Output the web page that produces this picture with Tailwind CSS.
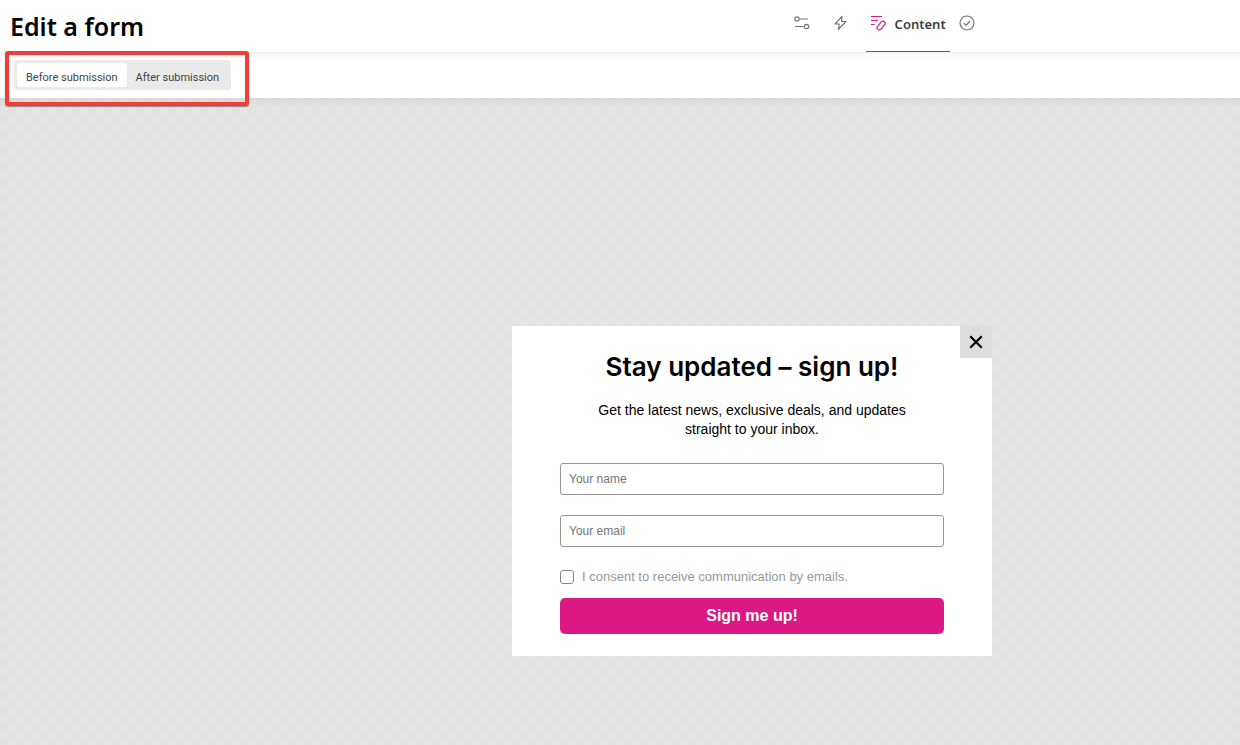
<!doctype html>
<html lang="en">

<head>
  <meta charset="UTF-8" />
  <meta name="viewport" content="width=device-width, initial-scale=1">
  <title>Edit a form</title>
  <script src="https://cdn.jsdelivr.net/npm/@tailwindcss/browser@4"></script>
</head>

<body class="relative flex min-h-screen flex-col bg-white font-['Liberation_Sans',sans-serif] text-black">
  <header class="flex h-[54px] shrink-0 border-b-2 border-[#f4f4f4]">
    <h1 class="w-[64%] pl-[10px] pt-[6px] font-['Noto_Sans',sans-serif] text-[25px] leading-10 font-semibold">Edit a form</h1>
    <nav class="flex h-[52px] text-[#757575]">
      <a href="#" aria-label="Settings" class="pt-[15px]">
        <svg width="16" height="16" viewBox="0 0 16 16" fill="none" stroke="currentColor" stroke-width="1.2">
          <circle cx="3" cy="4" r="2.2" />
          <path d="M5.5 4H14M1 11.5h8.5" />
          <circle cx="12.5" cy="11.5" r="2.2" />
        </svg>
      </a>
      <a href="#" aria-label="Triggers" class="ml-6 pt-[15px]">
        <svg width="14" height="16" viewBox="0 0 14 16" fill="none" stroke="currentColor" stroke-width="1.2" stroke-linejoin="round">
          <path d="M8 1.3 1 9h4.300L4.300 14.500 12 6.500H7.500z" />
        </svg>
      </a>
      <a href="#" aria-current="page"
        class="ml-[18px] flex gap-2 border-b border-[#db1884] px-1 pt-[15px] text-[#db1884]">
        <svg width="17" height="16" viewBox="0 0 17 16" fill="none" stroke="currentColor" stroke-width="1.2">
          <path d="M1 1.500h11M1 5.500h7M1 9.500h3.500" />
          <path d="M7.600 14.200c-.8-.8-.6-2.200.2-3.100l3.300-3.900c1-1.100 2.400-1.200 3.300-.4s1.100 2 .2 3.100l-3.300 3.900c-.9 1.100-2.600 1.500-3.700.4z" stroke-linejoin="round" />
        </svg>
        <span class="font-['Noto_Sans',sans-serif] text-[13px] leading-[18px] font-semibold text-[#3d3d3d]">Content</span>
      </a>
      <a href="#" aria-label="Publish" class="ml-[9px] pt-[15px]">
        <svg width="16" height="16" viewBox="0 0 16 16" fill="none" stroke="currentColor" stroke-width="1.2">
          <circle cx="8" cy="8" r="7" />
          <path d="m5 8.200 2.200 2L11 6" />
        </svg>
      </a>
    </nav>
  </header>

  <div class="h-[44px] shrink-0 bg-linear-to-b from-[#fafafa] to-white to-20% px-[14px] pt-[6px]">
    <div class="inline-flex rounded bg-[#eaeaea] p-[3px] font-['Roboto',sans-serif] text-[11px] text-[#444]">
      <button type="button" class="rounded-[3px] bg-white px-[9px] pt-[6px] leading-[18px]">Before submission</button>
      <button type="button" class="px-[9px] pt-[6px] leading-[18px]">After submission</button>
    </div>
  </div>

  <!-- highlight frame around the state switcher -->
  <div class="pointer-events-none absolute left-[5px] top-[51px] h-[55px] w-[244px] rounded-[3px] border-4 border-[#f43b3b] shadow-[0_1px_1px_rgba(0,0,0,0.4)]"></div>

  <main
    class="flex grow flex-col items-center bg-[repeating-conic-gradient(#e5e5e5_0_25%,#e2e2e2_0_50%)] bg-[length:16px_16px] pl-[264px] pt-[228px] shadow-[inset_0_8px_8px_-6px_rgba(0,0,0,0.08)]">
    <form class="relative flex w-full max-w-[480px] flex-col bg-white px-12 pb-[22px] pt-[25px]">
      <button type="button" aria-label="Close"
        class="absolute right-0 top-0 flex size-8 items-center justify-center bg-[#dddddd]">
        <svg width="14" height="14" viewBox="0 0 14 14" stroke="currentColor" stroke-width="2.2">
          <path d="m1.200 1.200 11.600 11.600M12.800 1.200 1.200 12.800" />
        </svg>
      </button>
      <h2 class="text-center font-['Inter',sans-serif] text-[26px] leading-8 font-semibold">Stay updated – sign up!</h2>
      <p class="mx-auto mt-[18px] max-w-[320px] text-center text-[14px] leading-[19px]">Get the latest news, exclusive deals, and updates straight to your inbox.</p>
      <input type="text" aria-label="Your name" placeholder="Your name"
        class="mt-6 h-8 rounded-[3px] border border-[#949494] px-2 text-[12px] placeholder:text-[#757575]">
      <input type="email" aria-label="Your email" placeholder="Your email"
        class="mt-5 h-8 rounded-[3px] border border-[#949494] px-2 text-[12px] placeholder:text-[#757575]">
      <div class="mt-5 flex h-5 items-center gap-2">
        <input id="consent" type="checkbox" class="size-[14px] appearance-none rounded-[3px] border border-[#858585] bg-white checked:bg-[#db1884]">
        <label for="consent" class="text-[13px] leading-5 text-[#999]">I consent to receive communication by emails.</label>
      </div>
      <button type="submit" class="mt-[11px] h-9 rounded-[5px] bg-[#db1884] text-[16px] font-bold text-white">Sign me up!</button>
    </form>
  </main>
</body>

</html>
